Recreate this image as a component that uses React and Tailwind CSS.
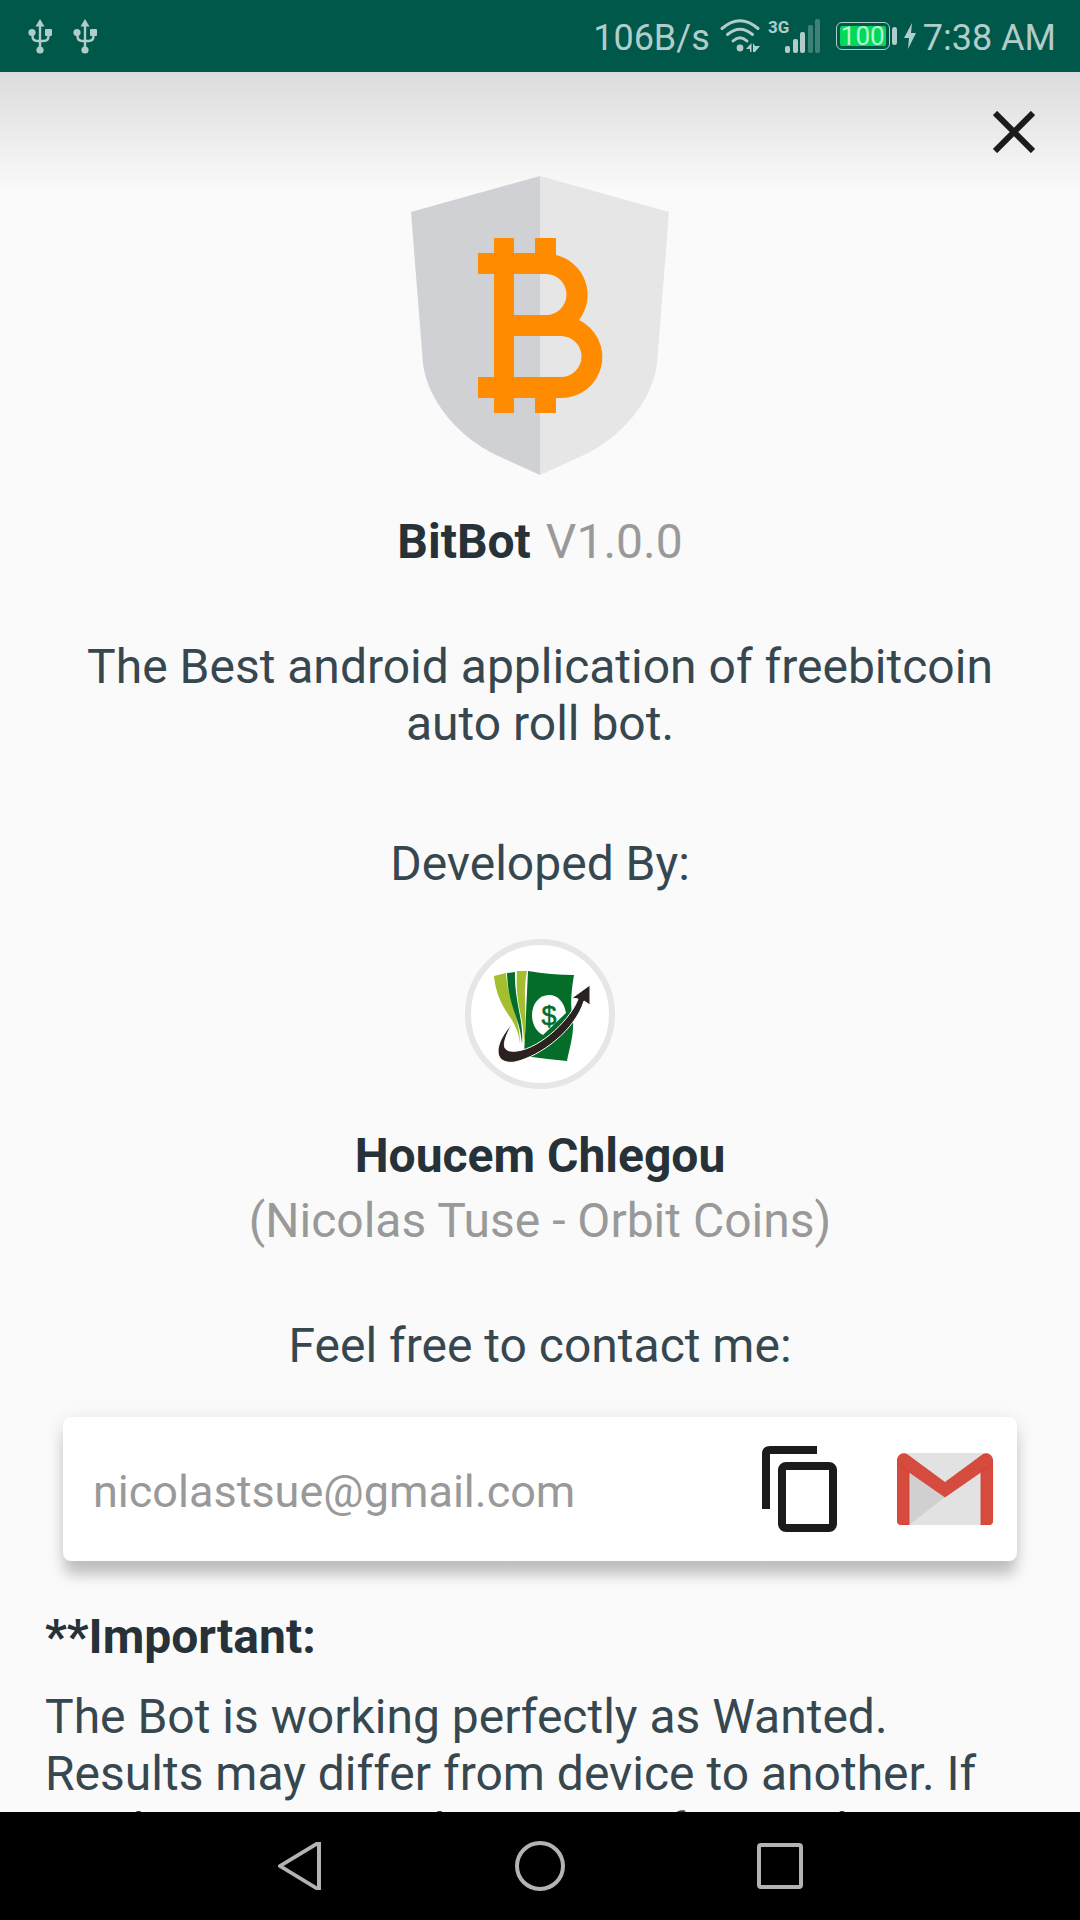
import React from "react";

function UsbIcon() {
  return (
    <svg className="h-9 w-6" viewBox="0 0 24 36" fill="#b2cdc9" aria-hidden="true">
      <path d="M12 1 L16.500 8.500 H7.500 Z" />
      <path d="M12 7 V30 M4.500 15 V18 Q4.500 23 9.500 23 H15.500 Q20.500 23 20.500 18 V15" fill="none" stroke="#b2cdc9" strokeWidth="2.400" />
      <circle cx="4" cy="14.500" r="3.600" />
      <rect x="17" y="11" width="7" height="7" rx="1" />
      <circle cx="12" cy="32" r="3.600" />
    </svg>
  );
}

function WifiIcon() {
  return (
    <svg className="h-9 w-10" viewBox="0 0 40 36" fill="none" stroke="#b2cdc9" strokeWidth="3" strokeLinecap="round" aria-hidden="true">
      <path d="M2 10.500 Q20 -5 38 10.500" />
      <path d="M7.500 16.500 Q20 6 32.500 16.500" />
      <path d="M13 23 Q20 16.500 27 23" />
      <circle cx="20" cy="30" r="3.400" fill="#b2cdc9" stroke="none" />
      <path d="M31.500 25 V34 L31.500 31 H26 Z M31.500 25 V34 H30 V31 H26 Z M33 25 L35 28 H40 L35 34 H33 Z" fill="#b2cdc9" stroke="none" />
    </svg>
  );
}

function SignalIcon() {
  return (
    <svg className="h-9 w-[52px]" viewBox="0 0 52 36" fill="#b2cdc9" aria-hidden="true">
      <text x="0" y="15" fontFamily="Roboto, sans-serif" fontWeight="700" fontSize="17">3G</text>
      <rect x="17" y="28" width="5" height="7" rx="2" />
      <rect x="25" y="21" width="5" height="14" rx="2" />
      <rect x="32" y="14" width="5" height="21" rx="2" />
      <rect x="40" y="7" width="5" height="28" rx="2" opacity=".35" />
      <rect x="47" y="1" width="5" height="34" rx="2" opacity=".35" />
    </svg>
  );
}

function BatteryIcon() {
  return (
    <span className="flex items-center gap-0.5">
      <span className="flex h-7 w-[54px] items-center justify-center rounded-md border border-[#b2cdc9] p-[3px]">
        <span className="flex h-full w-full items-center justify-center rounded-xs bg-[#00d95a] text-[26px] leading-none text-[#b9f5d2]">100</span>
      </span>
      <span className="h-[18px] w-[5px] rounded-sm bg-[#b2cdc9]" />
    </span>
  );
}

function Shield() {
  return (
    <svg className="mx-auto h-[300px] w-[260px]" viewBox="0 0 260 300" role="img" aria-label="BitBot logo">
      <path d="M130 0 L1 36 L13 188 C18 226 50 262 86 279 L130 299 Z" fill="#d0d1d5" />
      <path d="M130 0 L259 36 L247 188 C242 226 210 262 174 279 L130 299 Z" fill="#e6e6e6" />
      <path fill="#ff8c00" fillRule="evenodd" d="M84 62 H104 V77 H125 V62 H146 V79 A41 41 0 0 1 169 144 A41 41 0 0 1 151 222 H146 V237 H125 V222 H104 V237 H84 V222 H68 V201 H84 V98 H68 V77 H84 Z M104 98 V139 H136 A20.500 20.500 0 0 0 136 98 Z M104 160 V201 H151 A20.500 20.500 0 0 0 151 160 Z" />
    </svg>
  );
}

function DeveloperLogo() {
  return (
    <svg className="h-full w-full" viewBox="0 0 138 138" role="img" aria-label="Orbit Coins logo">
      <path d="M57 26 Q80 30 103 30 C100 48 99 60 102 76 C103 90 98 105 96 116 Q75 114 53 111 Z" fill="#046d29" />
      <path d="M23 31 L35 28 C36 52 49 72 49 99 C46 70 27 68 23 31 Z" fill="#a3bf2f" />
      <path d="M36 28 L44 27 C43 55 53 75 51 99 C49 72 37 62 36 28 Z" fill="#046d29" />
      <path d="M46 26 L56 26 C51 50 57 78 53 99 C53 70 44 62 46 26 Z" fill="#a3bf2f" />
      <path d="M78 50 C68 50 61 59 61 70 C61 80 66 87 72 90 L95 68 C93 57 87 50 78 50 Z" fill="#fff" />
      <text x="78" y="80" textAnchor="middle" fontFamily="Liberation Sans, sans-serif" fontSize="27" fill="#046d29" stroke="#046d29" strokeWidth=".5">$</text>
      <path d="M41 79 C31 98 29 108 46 106 C71 103 101 72 107 54 L101 53 L119 40 V60 L113 56 C104 85 70 111 44 117 C23 120 21 101 41 79 Z" fill="#2b211e" stroke="#fff" strokeWidth="1" />
    </svg>
  );
}

function GmailIcon() {
  return (
    <svg className="h-[72px] w-24" viewBox="0 0 96 72" aria-hidden="true">
      <rect x="4" width="88" height="72" fill="#e2e2e2" />
      <path d="M12 18 L48 44 L12 72 Z" fill="#d0d0d0" />
      <path d="M0 6 H12 V72 H5 Q0 72 0 67 Z M96 6 H84 V72 H91 Q96 72 96 67 Z" fill="#d54b3d" stroke="#d93831" strokeWidth=".8" />
      <path d="M10 1 L48 29 L86 1 C93 -2 99 6 94 12 L48 44 L2 12 C-3 6 3 -2 10 1 Z" fill="#d54b3d" />
      <path d="M2 12 L48 44 L94 12" fill="none" stroke="#d93831" strokeWidth=".8" />
    </svg>
  );
}

export default function App() {
  return (
    <div className="flex h-screen flex-col overflow-hidden bg-[#fafafa] font-[Roboto,sans-serif] text-5xl leading-[57px] text-[#37474f]">
      <header className="flex h-[72px] shrink-0 items-center justify-between bg-[#00584b] pr-6 pl-7 text-[36px] leading-none text-[#b2cdc9]">
        <div className="flex gap-[21px]">
          <UsbIcon />
          <UsbIcon />
        </div>
        <div className="flex items-center">
          <span className="mr-2.5 pt-1">106B/s</span>
          <WifiIcon />
          <span className="w-2" />
          <SignalIcon />
          <span className="w-4" />
          <BatteryIcon />
          <svg className="mx-[7px] h-[26px] w-3" viewBox="0 0 12 26" fill="#b2cdc9" aria-hidden="true">
            <path d="M8 0 L0 15 H5 L4 26 L12 10 H7 Z" />
          </svg>
          <span className="pt-1">7:38 AM</span>
        </div>
      </header>

      <main className="relative min-h-0 flex-1 overflow-y-auto bg-linear-to-b from-[#dcdcdc] to-[#fafafa] to-[120px] pt-[104px] [scrollbar-width:none]">
        <button type="button" aria-label="Close" className="absolute top-6 right-[30px] flex size-[72px] items-center justify-center">
          <svg className="size-[42px]" viewBox="0 0 42 42" stroke="#1b1b1b" strokeWidth="6" aria-hidden="true">
            <path d="M2 2 L40 40 M40 2 L2 40" />
          </svg>
        </button>

        <section className="text-center">
          <Shield />
          <h1 className="mt-[37px] flex justify-center gap-[15px]">
            <b className="font-bold text-[#263238]">BitBot</b>
            <span className="text-[#999999]">V1.0.0</span>
          </h1>
          <p className="mt-[68px] px-16">The Best android application of freebitcoin auto roll bot.</p>
          <p className="mt-[83px]">Developed By:</p>
          <div className="mx-auto mt-[47px] size-[150px] rounded-full border-6 border-[#e6e6e6] bg-white">
            <DeveloperLogo />
          </div>
          <h2 className="mt-[38px] font-bold text-[#263238]">Houcem Chlegou</h2>
          <p className="mt-2 text-[#999999]">(Nicolas Tuse - Orbit Coins)</p>
          <p className="mt-[68px]">Feel free to contact me:</p>
        </section>

        <div className="mx-[63px] mt-[43px] flex h-36 items-center rounded-lg bg-white pr-6 pl-[30px] shadow-[0_17px_14px_-2px_rgba(0,0,0,0.18),0_4px_18px_rgba(0,0,0,0.12)]">
          <span className="flex-1 pt-1 text-[45px] text-[#999999]">nicolastsue@gmail.com</span>
          <button type="button" aria-label="Copy email address">
            <svg className="h-[86px] w-[75px]" viewBox="0 0 75 86" fill="none" stroke="#1b1b1b" strokeWidth="8" aria-hidden="true">
              <path d="M55 4 H8 Q4 4 4 8 V63" />
              <rect x="20" y="20" width="51" height="62" rx="4" />
            </svg>
          </button>
          <button type="button" aria-label="Send with Gmail" className="ml-[60px]">
            <GmailIcon />
          </button>
        </div>

        <section className="px-[45px]">
          <h3 className="mt-[47px] font-bold text-[#263238]">**Important:</h3>
          <p className="mt-[23px]">The Bot is working perfectly as Wanted. Results may differ from device to another. If you have issue with earnings for another reason contact me.</p>
        </section>
      </main>

      <nav className="flex h-[108px] shrink-0 items-center justify-center gap-48 bg-black pr-0.5" aria-label="System navigation">
        <button type="button" aria-label="Back">
          <svg className="size-12" viewBox="0 0 48 48" fill="none" stroke="#b3b3b3" strokeWidth="4" strokeLinejoin="round" aria-hidden="true">
            <path d="M5 24 L44 -2 V50 Z" transform="translate(0 2.200) scale(1 .91)" />
          </svg>
        </button>
        <button type="button" aria-label="Home">
          <svg className="size-[50px]" viewBox="0 0 50 50" fill="none" stroke="#b3b3b3" strokeWidth="4" aria-hidden="true">
            <ellipse cx="25" cy="25" rx="23" ry="23" />
          </svg>
        </button>
        <button type="button" aria-label="Recent apps">
          <svg className="size-[46px]" viewBox="0 0 46 46" fill="none" stroke="#b3b3b3" strokeWidth="4" aria-hidden="true">
            <rect x="2" y="2" width="42" height="42" rx="2" />
          </svg>
        </button>
      </nav>
    </div>
  );
}
